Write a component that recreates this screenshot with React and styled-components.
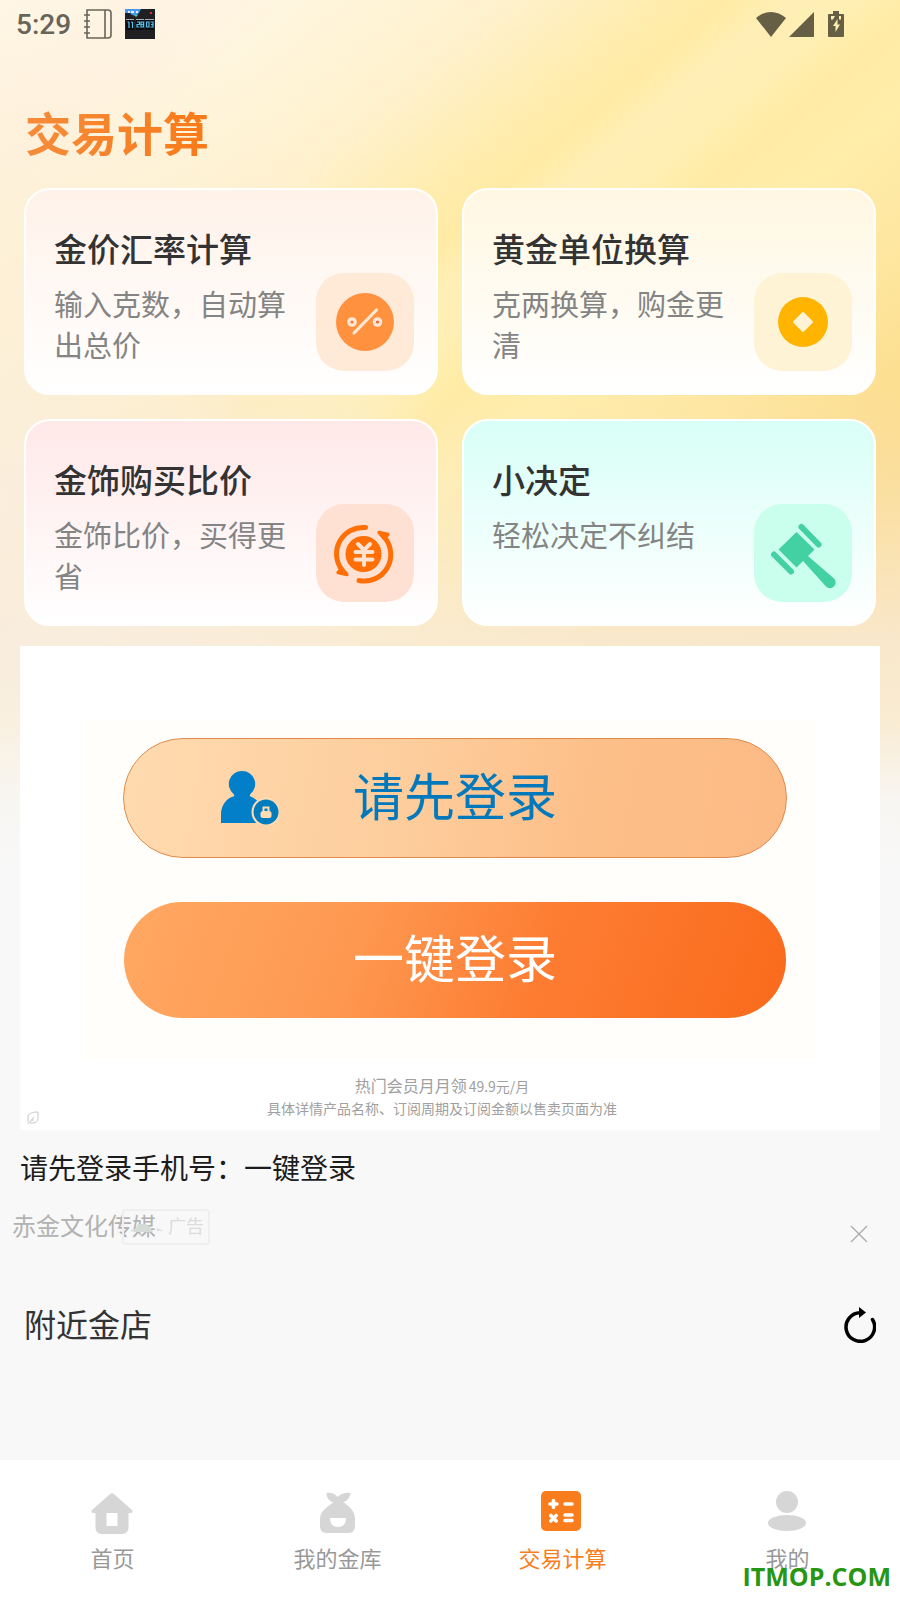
import React from "react"
import styled, { createGlobalStyle } from "styled-components"

const GlobalStyle = createGlobalStyle`
  * {
    box-sizing: border-box;
  }

  body {
    margin: 0;
    font-family: "Noto Sans CJK SC", "Noto Sans", sans-serif;
    color: #333;
  }

  h1, h2, h3, p {
    margin: 0;
    font-weight: 400;
  }

  a {
    color: inherit;
    text-decoration: none;
  }

  button {
    font: inherit;
    border: 0;
    padding: 0;
    background: none;
    cursor: pointer;
  }

  svg {
    display: block;
  }
`

const Page = styled.div`
  position: relative;
  display: flex;
  flex-direction: column;
  min-height: 100vh;
  background-color: #f8f8f8;
  background-image:
    linear-gradient(
      180deg,
      rgba(248, 236, 226, 0) 380px,
      rgba(248, 236, 224, 0.35) 520px,
      rgba(248, 236, 224, 0.75) 640px,
      rgba(248, 240, 228, 0.8) 720px,
      #f8f6f2 800px,
      #f8f8f8 870px
    ),
    radial-gradient(
      440px 520px at 0 500px,
      rgba(251, 239, 220, 0.95) 0%,
      rgba(252, 239, 212, 0.8) 50%,
      rgba(253, 238, 196, 0) 100%
    ),
    linear-gradient(
      140deg,
      #fff7e6 0%,
      #fff3e3 10%,
      #fff6df 15%,
      #fff1cc 26%,
      #ffedb0 33%,
      #ffeba5 37%,
      #ffefb6 40%,
      #ffefb4 43%,
      #ffeba4 47%,
      #ffedaa 52%,
      #fee7a0 60%,
      #fcdb8a 72%,
      #fbd78a 100%
    );
  background-size: 100% 900px;
  background-repeat: no-repeat;
`

const StatusBar = styled.div`
  display: flex;
  align-items: center;
  justify-content: space-between;
  height: 48px;
  padding: 0 56px 0 16px;
  color: #69645a;
`

const StatusGroup = styled.div`
  display: flex;
  align-items: center;
  gap: ${props => props.$gap}px;
`

const Clock = styled.span`
  font-family: Roboto, sans-serif;
  font-size: 28px;
  font-weight: 500;
  line-height: 48px;
  margin-top: 2px;
`

const PageTitle = styled.h1`
  align-self: flex-start;
  margin: 53px 0 27px 25px;
  font-size: 46px;
  font-weight: 700;
  line-height: 60px;
  color: transparent;
  background: linear-gradient(90deg, #f58c3c, #f97a18);
  background-clip: text;
`

const CardGrid = styled.div`
  display: grid;
  grid-template-columns: 1fr 1fr;
  gap: 24px;
  padding: 0 24px;
`

const Card = styled.a`
  display: flex;
  gap: 8px;
  min-height: 207px;
  padding: 34px 22px 22px 28px;
  border: 2px solid #fff;
  border-radius: 26px;
  background: linear-gradient(180deg, ${props => props.$tint}, #fff);
`

const CardText = styled.div`
  flex: 1;
`

const CardTitle = styled.h2`
  font-size: 33px;
  font-weight: 500;
  line-height: 48px;
  margin-bottom: 11px;
`

const CardDesc = styled.p`
  font-size: 29px;
  line-height: 41px;
  color: #848484;
`

const CardIcon = styled.div`
  align-self: flex-end;
  flex: none;
  width: 98px;
  height: 98px;
  border-radius: 28px;
  background: ${props => props.$bg};
`

const AdPanel = styled.section`
  margin: 20px 20px 0;
  padding-top: 75px;
  background: #fff;
`

const AdButtons = styled.div`
  display: flex;
  flex-direction: column;
  gap: 44px;
  margin: 0 64px;
  padding: 17px 29px 42px 39px;
  background: #fffefb;
`

const Pill = styled.button`
  display: grid;
  grid-template-columns: 1fr auto 1fr;
  align-items: center;
  border-radius: 60px;
  font-size: 51px;
  line-height: 60px;
`

const PromptPill = styled(Pill)`
  height: 120px;
  border: 1px solid #e18a4c;
  color: #0379bb;
  background: linear-gradient(100deg, #ffdbb0, #fdcc9b 45%, #fdbf89 70%, #fcba85);
`

const LoginPill = styled(Pill)`
  height: 116px;
  margin: 0 1px;
  color: #fff;
  background: linear-gradient(110deg, #ffa863, #fe9850 35%, #fd7d33 62%, #fa6a1b);
`

const PillIcon = styled.span`
  padding-left: 97px;
`

const PillLabel = styled.span`
  grid-column: 2;
  padding-bottom: 8px;
`

const AdFooter = styled.div`
  display: grid;
  grid-template-columns: 12px 1fr;
  align-items: end;
  padding: 14px 35px 5px 7px;
  text-align: center;
  color: #a0a0a0;
`

const AdNotes = styled.div`
  padding-bottom: 6px;
`

const AdNote = styled.p`
  font-size: 14px;
  line-height: 22px;
`

const AdNoteLead = styled.span`
  font-size: 16px;
  margin-right: 2px;
`

const AdHeadline = styled.h3`
  margin: 17px 20px 22px;
  font-size: 28px;
  line-height: 40px;
  color: #1c1c1c;
`

const AdSource = styled.div`
  display: flex;
  align-items: flex-start;
  padding: 0 16px 0 12px;
`

const Advertiser = styled.span`
  font-size: 24px;
  line-height: 32px;
  color: #b2b2b2;
`

const AdBadge = styled.span`
  display: flex;
  gap: 4px;
  height: 36px;
  margin-left: -34px;
  padding: 0 4px;
  border: 2px solid #efefef;
  border-radius: 4px;
  font-size: 18px;
  line-height: 28px;
  color: #dcdcdc;
`

const CloseButton = styled.button`
  display: flex;
  align-items: center;
  justify-content: center;
  width: 50px;
  height: 50px;
  margin-left: auto;
`

const NearbyHeader = styled.div`
  display: flex;
  align-items: center;
  justify-content: space-between;
  margin: 42px 24px 110px;
`

const NearbyTitle = styled.h2`
  padding-bottom: 4px;
  font-size: 32px;
  line-height: 44px;
`

const TabBar = styled.nav`
  display: grid;
  grid-template-columns: repeat(4, 1fr);
  margin-top: auto;
  padding: 30px 0 27px;
  background: #fff;
`

const Tab = styled.a`
  display: flex;
  flex-direction: column;
  align-items: center;
  gap: 7px;
  font-size: 22px;
  line-height: 32px;
  color: ${props => (props.$active ? "#f97d1c" : "#999")};
`

const Watermark = styled.span`
  position: absolute;
  right: 9px;
  bottom: 6px;
  font-family: "Open Sans", sans-serif;
  font-size: 25px;
  font-weight: 700;
  line-height: 36px;
  color: #279613;
`

//status bar icons=======================
const NotebookIcon = () => (
  <svg width="28" height="30" viewBox="0 0 28 30" fill="none" stroke="currentColor" strokeWidth="1.6">
    <path d="M3 1h21a3 3 0 0 1 3 3v22a3 3 0 0 1-3 3H3zM21 1v28" />
    <path d="M0 6h6M0 12h6M0 18h6M0 24h6" />
  </svg>
)

const ClockAppIcon = () => (
  <svg width="30" height="30" viewBox="0 0 30 30">
    <path fill="#1e2024" d="M0 0h30v30H0z" />
    <path fill="#4a97ee" d="M0 0h16l-2 4-3 3-4-1-2-2H0z" />
    <path fill="#55cf7c" d="M9 6h4l-2 2z" />
    <path fill="#e3f1ff" d="M3 2h2v2H3zM6 2h3v2H6zM11 2h2v2h-2z" />
    <path fill="#e0312c" d="M25 3h2v2h-2z" />
    <path fill="#aab0b5" d="M1 10h8v1H1zM11 10h8v1h-8zM20 10h9v1h-9z" />
    <path fill="#0c0d10" d="M1 11h8v10H1zM11 11h8v10h-8zM20 11h9v10h-9z" />
    <g fill="none" stroke="#55c3ee" strokeWidth="1.2">
      <path d="M4 13v6M2.500 13H4M7.500 13v6M6 13h1.500" />
      <path d="M12 13h2.500v2.500H12V18h2.500M16 13h2.500v5H16zM16 15.500h2.500" />
      <path d="M21.500 13H24v5h-2.500zM25.500 13H28v5h-2.500M26 15.500h2" />
    </g>
  </svg>
)

const WifiIcon = () => (
  <svg width="30" height="25" viewBox="0 0 30 25" fill="#665f45">
    <path d="M0 6C9-2 21-2 30 6L15 25z" />
  </svg>
)

const SignalIcon = () => (
  <svg width="25" height="25" viewBox="0 0 25 25" fill="#665f45">
    <path d="M25 0v25H0z" />
  </svg>
)

const BatteryIcon = () => (
  <svg width="16" height="26" viewBox="0 0 16 26">
    <path fill="#665f45" d="M5 0h6v3h4a1 1 0 0 1 1 1v21a1 1 0 0 1-1 1H1a1 1 0 0 1-1-1V4a1 1 0 0 1 1-1h4z" />
    <path fill="#ffefb4" d="M3 5h4L5 8.500H3zM11 5h2v3.500h-2z" />
    <path fill="#ffefb4" d="M9.500 8v5.500H12L7.500 21v-6H5z" />
  </svg>
)

//card icons=======================
const PercentIcon = () => (
  <svg width="98" height="98" viewBox="0 0 98 98">
    <circle cx="49" cy="49" r="29" fill="#ff913f" />
    <g fill="none" stroke="#ffe9d6" strokeWidth="3.200" strokeLinecap="round">
      <circle cx="36" cy="49" r="3.200" fill="#ff7a3c" />
      <circle cx="61.500" cy="49" r="3.200" fill="#ff5f3c" />
      <path d="M38 60l22.500-23" />
    </g>
  </svg>
)

const CoinIcon = () => (
  <svg width="98" height="98" viewBox="0 0 98 98">
    <circle cx="49" cy="49" r="25" fill="#ffb400" />
    <path d="M49 40l9 9-9 9-9-9z" fill="#fff3d6" stroke="#fff3d6" strokeWidth="2" strokeLinejoin="round" />
  </svg>
)

const YuanIcon = () => (
  <svg width="98" height="98" viewBox="0 0 98 98" fill="none" strokeLinecap="round" strokeLinejoin="round">
    <circle cx="47.500" cy="50" r="18" fill="#ff6f06" />
    <g stroke="#ff6f06" strokeWidth="5">
      <path d="M49.500 23.500A26.500 26.500 0 0 0 26 66" />
      <path d="M43 76.500A26.500 26.500 0 0 0 69 34" />
    </g>
    <path d="M22 68.500l9 2-5-6zM72 30.500l-9-2 5 6z" fill="#ff6f06" stroke="#ff6f06" strokeWidth="3.400" />
    <path d="M42 40l6 6 6-6M39.500 48h17M39.500 55.500h17M48 47v14" stroke="#ffe2d2" strokeWidth="4" />
  </svg>
)

const HammerIcon = () => (
  <svg width="98" height="98" viewBox="0 0 98 98" fill="#43d1a4">
    <path d="M42.500 28l18 17.500-6.500 6.500 26 22.500a5.500 5.500 0 0 1-8 8L49 57 42.500 63.500l-18-18z" />
    <path d="M47.500 23l17 17.500M20 50.500l17 17" stroke="#43d1a4" strokeWidth="6" strokeLinecap="round" />
  </svg>
)

//ad icons=======================
const UserLockIcon = () => (
  <svg width="58" height="54" viewBox="0 0 58 54">
    <path fill="#037fca" d="M21 0a13 13 0 0 1 8.500 23c-1 1-1 2 0 2.500 6 2 12.500 9 12.500 17V52H0v-9c0-9 6-16 12.500-17.500 1-.5 1-1.500 0-2.500A13 13 0 0 1 21 0z" />
    <circle cx="45" cy="41" r="14.500" fill="#ffdcb2" />
    <circle cx="45" cy="41" r="12.500" fill="#037cbd" />
    <path d="M42.500 41v-4.500h5V41" fill="none" stroke="#ffdcb2" strokeWidth="2" />
    <rect x="39.500" y="40" width="11" height="7" rx="2.500" fill="#ffdcb2" />
  </svg>
)

const LeafIcon = () => (
  <svg width="12" height="14" viewBox="0 0 12 14" fill="none" stroke="#c8c8c8" strokeWidth="1">
    <path d="M1 11V6c0-3 3-5 10-5v7c0 2-2 4-5 4H3M1 13l6-7M4 9h3" />
  </svg>
)

const AdLogo = () => (
  <svg width="36" height="32" viewBox="0 0 36 32">
    <path fill="#d5dbd6" d="M2 20l6-3 2-4h8l4 3 3 5H8z" />
    <path fill="#d9dfe2" d="M29 17l6 3h-6z" />
  </svg>
)

const CloseIcon = () => (
  <svg width="18" height="18" viewBox="0 0 18 18" stroke="#a8a8a8" strokeWidth="1.200">
    <path d="M1 1l16 16M17 1L1 17" />
  </svg>
)

const RefreshIcon = () => (
  <svg width="32" height="36" viewBox="0 0 32 36">
    <path d="M28.500 12.500A14.300 14.300 0 1 1 16 5.700" fill="none" stroke="#000" strokeWidth="3.500" strokeLinecap="round" />
    <path d="M15 0l7 5.500-7 5.500z" />
  </svg>
)

//tab icons=======================
const HomeIcon = () => (
  <svg width="44" height="44" viewBox="1 0 44 44" fill="#d6d6d6">
    <path
      fillRule="evenodd"
      d="M20.500 3.700a2.500 2.500 0 0 1 3 0L42 20c1 1 .5 3-1 3h-2.500v15a6 6 0 0 1-6 6h-21a6 6 0 0 1-6-6V23H3c-1.500 0-2-2-1-3zM16.500 23v13h11V23z"
    />
  </svg>
)

const BagIcon = () => (
  <svg width="44" height="44" viewBox="0 0 44 44" fill="#d6d6d6">
    <path d="M21.500 7c-3-4-7-4.500-11-4 0 6 4 9 7.500 9.500h8c4-.5 8-4 8.500-9.500-4.500-.5-9 0-13 4z" />
    <path
      fillRule="evenodd"
      d="M18 12h9c6 4 12 9 12 17v8a6 6 0 0 1-6 6H10a6 6 0 0 1-6-6v-8c0-8 7.500-12.500 14-17zM14 28c0 6 3 9 8 9s8-3 8-9z"
    />
  </svg>
)

const CalcIcon = () => (
  <svg width="44" height="44" viewBox="0 0 44 44">
    <rect x="0" y="1" width="40" height="40" rx="5" fill="#f97d1c" />
    <g stroke="#fff" strokeWidth="3.600" strokeLinecap="round">
      <path d="M9 14h7M12.500 10.500v7M24 14h7M24 25h7M24 30.500h7" />
      <path d="M9.800 25.500l5.400 5.400M15.200 25.500l-5.400 5.400" />
    </g>
  </svg>
)

const PersonIcon = () => (
  <svg width="44" height="44" viewBox="0 0 44 44" fill="#d6d6d6">
    <circle cx="21" cy="12" r="11" />
    <ellipse cx="21" cy="33" rx="19" ry="8" />
  </svg>
)

const tools = [
  { title: "金价汇率计算", desc: "输入克数，自动算出总价", tint: "#fff2e9", iconBg: "#ffe9d7", icon: <PercentIcon /> },
  { title: "黄金单位换算", desc: "克两换算，购金更清", tint: "#fff7e2", iconBg: "#fff3d6", icon: <CoinIcon /> },
  { title: "金饰购买比价", desc: "金饰比价，买得更省", tint: "#ffe8e8", iconBg: "#ffe1d3", icon: <YuanIcon /> },
  { title: "小决定", desc: "轻松决定不纠结", tint: "#d8fff7", iconBg: "#cbffed", icon: <HammerIcon /> },
]

const tabs = [
  { name: "首页", icon: <HomeIcon /> },
  { name: "我的金库", icon: <BagIcon /> },
  { name: "交易计算", icon: <CalcIcon />, active: true },
  { name: "我的", icon: <PersonIcon /> },
]

export default function App() {
  return (
    <Page>
      <GlobalStyle />
      <StatusBar>
        <StatusGroup $gap={13}>
          <Clock>5:29</Clock>
          <NotebookIcon />
          <ClockAppIcon />
        </StatusGroup>
        <StatusGroup $gap={14}>
          <StatusGroup $gap={3}>
            <WifiIcon />
            <SignalIcon />
          </StatusGroup>
          <BatteryIcon />
        </StatusGroup>
      </StatusBar>

      <PageTitle>交易计算</PageTitle>

      <CardGrid>
        {tools.map((tool) => (
          <Card key={tool.title} href="#" $tint={tool.tint}>
            <CardText>
              <CardTitle>{tool.title}</CardTitle>
              <CardDesc>{tool.desc}</CardDesc>
            </CardText>
            <CardIcon $bg={tool.iconBg}>{tool.icon}</CardIcon>
          </Card>
        ))}
      </CardGrid>

      <AdPanel>
        <AdButtons>
          <PromptPill>
            <PillIcon>
              <UserLockIcon />
            </PillIcon>
            <PillLabel>请先登录</PillLabel>
          </PromptPill>
          <LoginPill>
            <PillLabel>一键登录</PillLabel>
          </LoginPill>
        </AdButtons>
        <AdFooter>
          <LeafIcon />
          <AdNotes>
            <AdNote>
              <AdNoteLead>热门会员月月领</AdNoteLead>49.9元/月
            </AdNote>
            <AdNote>具体详情产品名称、订阅周期及订阅金额以售卖页面为准</AdNote>
          </AdNotes>
        </AdFooter>
      </AdPanel>

      <AdHeadline>请先登录手机号：一键登录</AdHeadline>
      <AdSource>
        <Advertiser>赤金文化传媒</Advertiser>
        <AdBadge>
          <AdLogo />
          广告
        </AdBadge>
        <CloseButton aria-label="关闭">
          <CloseIcon />
        </CloseButton>
      </AdSource>

      <NearbyHeader>
        <NearbyTitle>附近金店</NearbyTitle>
        <button aria-label="刷新">
          <RefreshIcon />
        </button>
      </NearbyHeader>

      <TabBar>
        {tabs.map((tab) => (
          <Tab key={tab.name} href="#" $active={tab.active}>
            {tab.icon}
            {tab.name}
          </Tab>
        ))}
      </TabBar>
      <Watermark>ITMOP.COM</Watermark>
    </Page>
  )
}
